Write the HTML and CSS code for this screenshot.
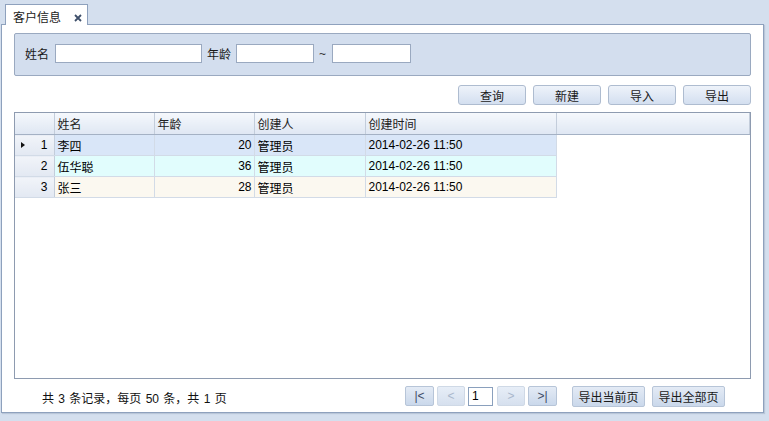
FILE: index.html
```html
<!DOCTYPE html>
<html lang="zh-CN">
<head>
    <meta charset="UTF-8">
    <title>客户信息</title>
    <link rel="stylesheet" href="styles.css">
</head>
<body>
    <div class="tabs">
        <div class="tab">客户信息<svg class="tab-close" width="8" height="8" viewBox="0 0 8 8"><path d="M1 1L7 7M7 1L1 7" stroke="#3e4f6a" stroke-width="1.8"/></svg></div>
    </div>
    <div class="panel">
        <div class="search">
            <label class="first">姓名</label>
            <input class="field name" type="text">
            <label>年龄</label>
            <input class="field age" type="text">
            <span class="tilde">~</span>
            <input class="field age last" type="text">
        </div>
        <div class="toolbar">
            <button class="btn">查询</button>
            <button class="btn">新建</button>
            <button class="btn">导入</button>
            <button class="btn">导出</button>
        </div>
        <div class="grid">
            <table>
                <colgroup>
                    <col style="width:39px">
                    <col style="width:100px">
                    <col style="width:100px">
                    <col style="width:111px">
                    <col style="width:191px">
                    <col>
                </colgroup>
                <thead>
                    <tr>
                        <th></th>
                        <th>姓名</th>
                        <th>年龄</th>
                        <th>创建人</th>
                        <th>创建时间</th>
                        <th></th>
                    </tr>
                </thead>
                <tbody>
                    <tr class="row-selected">
                        <td class="rownum"><span class="marker"></span>1</td>
                        <td>李四</td>
                        <td class="num">20</td>
                        <td>管理员</td>
                        <td>2014-02-26 11:50</td>
                        <td class="blank"></td>
                    </tr>
                    <tr class="row-alt">
                        <td class="rownum">2</td>
                        <td>伍华聪</td>
                        <td class="num">36</td>
                        <td>管理员</td>
                        <td>2014-02-26 11:50</td>
                        <td class="blank"></td>
                    </tr>
                    <tr class="row-plain">
                        <td class="rownum">3</td>
                        <td>张三</td>
                        <td class="num">28</td>
                        <td>管理员</td>
                        <td>2014-02-26 11:50</td>
                        <td class="blank"></td>
                    </tr>
                </tbody>
            </table>
        </div>
        <div class="footer">
            <span class="summary">共 3 条记录，每页 50 条，共 1 页</span>
            <div class="pager">
                <button class="pbtn">|&lt;</button>
                <button class="pbtn off">&lt;</button>
                <input class="page-input" type="text" value="1">
                <button class="pbtn off">&gt;</button>
                <button class="pbtn">&gt;|</button>
            </div>
            <button class="xbtn">导出当前页</button>
            <button class="xbtn">导出全部页</button>
        </div>
    </div>
</body>
</html>
```

FILE: styles.css
```css
body {
    margin: 0;
    background: #d4dfee;
    font-family: "Liberation Sans", "Noto Sans CJK SC", sans-serif;
    font-size: 12px;
    color: #000;
    height: 421px;
    overflow: hidden;
}
.tabs {
    height: 24px;
    padding: 3px 0 0 5px;
    box-sizing: border-box;
    display: flex;
    align-items: flex-end;
}
.tab {
    height: 21px;
    width: 83px;
    box-sizing: border-box;
    background: #fff;
    border: 1px solid #8ea1bd;
    border-bottom: none;
    padding: 3px 0 0 7px;
    color: #1a1a1a;
    position: relative;
    top: 1px;
}
.tab-close {
    margin-left: 13px;
    vertical-align: 0;
}
.panel {
    margin: 0 5px 0 1px;
    height: 389px;
    box-sizing: border-box;
    background: #fff;
    border: 1px solid #8ea1bd;
    padding: 8px 12px 0 12px;
    box-shadow: 1px 1px 1px #b9c6d8;
}
.search {
    height: 43px;
    box-sizing: border-box;
    background: #d3deee;
    border: 1px solid #9aa9c0;
    border-radius: 2px;
    display: flex;
    align-items: center;
    padding: 0 0 2px 10px;
}
.search label {
    margin-right: 5px;
    color: #1a1a1a;
}
.search label.first {
    margin-right: 6px;
}
.field {
    height: 19px;
    box-sizing: border-box;
    border: 1px solid #9aa9c0;
    background: #fff;
    margin: 0 5px 0 0;
    padding: 0;
}
.field.name {
    width: 147px;
}
.field.age {
    width: 78px;
}
.field.last {
    width: 79px;
}
.tilde {
    margin: 0 6px 0 0;
    color: #333;
}
.toolbar {
    margin-top: 9px;
    display: flex;
    justify-content: flex-end;
    gap: 7px;
}
.btn {
    width: 68px;
    height: 20px;
    border: 1px solid #aebcd0;
    border-radius: 3px;
    background: linear-gradient(#eef3fa, #d3dff0);
    font: inherit;
    color: #1a1a1a;
    padding: 0;
}
.grid {
    margin-top: 7px;
    height: 267px;
    box-sizing: border-box;
    border: 1px solid #8e9bb0;
    overflow: hidden;
}
.grid table {
    width: 100%;
    table-layout: fixed;
    border-collapse: collapse;
}
.grid th {
    height: 21px;
    padding: 0 0 0 3px;
    text-align: left;
    font-weight: normal;
    color: #222;
    background: linear-gradient(#f5f8fc, #dfe7f3);
    border-right: 1px solid #c3cddb;
    border-bottom: 1px solid #a4b1c4;
}
.grid td {
    height: 20px;
    padding: 0 0 0 3px;
    border-right: 1px solid #d2dbe7;
    border-bottom: 1px solid #d2dbe7;
    white-space: nowrap;
}
.grid td.num {
    text-align: right;
    padding: 0 2px 0 0;
}
.grid td.rownum {
    text-align: right;
    padding: 0 6px 0 0;
    background: linear-gradient(#f1f4f9, #e2e8f2);
    border-right: 1px solid #c3cddb;
    position: relative;
}
.grid td.blank {
    background: #fff;
    border: none;
}
.marker {
    position: absolute;
    left: 6px;
    top: 7px;
    border-left: 4px solid #111;
    border-top: 3px solid transparent;
    border-bottom: 3px solid transparent;
}
.row-selected td {
    background: #d9e6f8;
}
.row-alt td {
    background: #e1fdfd;
}
.row-plain td {
    background: #fbf8f0;
}
.footer {
    height: 34px;
    display: flex;
    align-items: center;
    padding-left: 28px;
    padding-right: 26px;
}
.summary {
    flex: 1;
    color: #111;
    padding-top: 2px;
    word-spacing: 1px;
}
.pager {
    display: flex;
    align-items: center;
    gap: 3px;
    margin-right: 15px;
}
.pbtn {
    width: 29px;
    height: 20px;
    padding: 0;
    border: 1px solid #b7c5d8;
    border-radius: 2px;
    background: linear-gradient(#e4ebf5, #cad8eb);
    font: inherit;
    color: #3c4c66;
}
.pbtn.off {
    width: 28px;
    color: #a9b8cc;
    border-color: #cfd9e6;
    background: linear-gradient(#e7eef7, #d6e0ee);
}
.page-input {
    width: 25px;
    height: 19px;
    box-sizing: border-box;
    border: 1px solid #8aa0bd;
    font: inherit;
    padding: 0 3px;
    margin-right: 1px;
}
.xbtn {
    width: 73px;
    height: 21px;
    padding: 0;
    margin-left: 7px;
    border: 1px solid #b7c5d8;
    border-radius: 2px;
    background: linear-gradient(#e4ebf5, #cad8eb);
    font: inherit;
    color: #1a1a1a;
}
.pager + .xbtn {
    margin-left: 0;
}
```
